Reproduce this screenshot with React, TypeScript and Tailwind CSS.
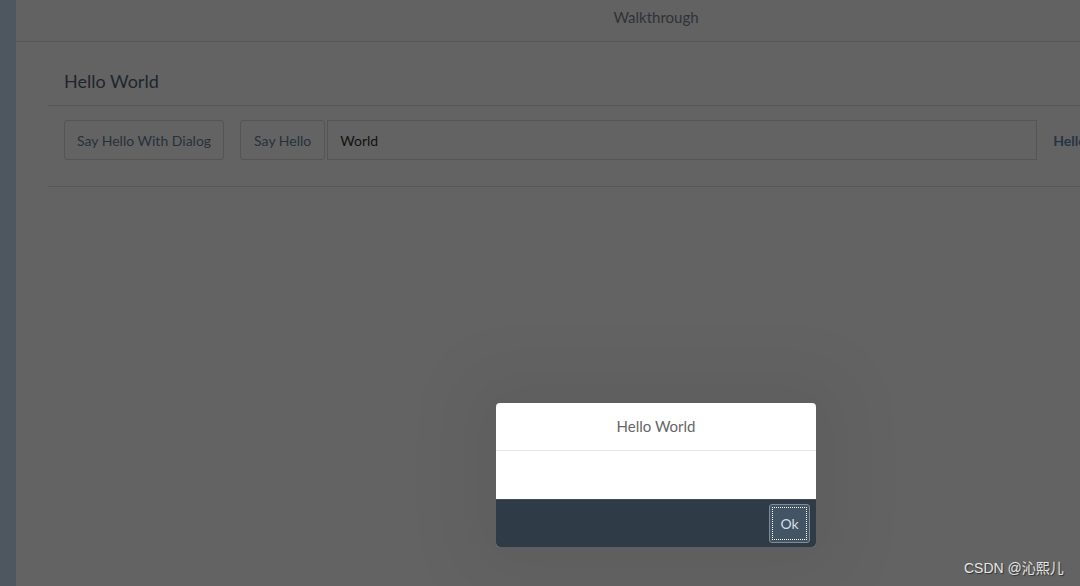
export default function App() {
  return (
    <div className="relative w-[1080px] h-[586px] overflow-hidden bg-[#636363] flex" style={{ fontFamily: 'Lato, "Noto Sans", sans-serif' }}>
      <div className="w-4 shrink-0 bg-[#4e5660]" />
      <div className="w-[1280px] shrink-0 flex flex-col">
        <div className="h-[42px] shrink-0 border-b border-[#575757] flex items-center justify-center pb-[6px] bg-[#626263]">
          <span className="text-[15px] text-[#2f3338]">Walkthrough</span>
        </div>
        <div className="px-8">
          <div className="h-[64px] border-b border-[#575757] flex items-end pl-4 pb-3">
            <span className="text-[18px] leading-6 text-[#1f252d]">Hello World</span>
          </div>
          <div className="h-[81px] border-b border-[#575757] flex items-start pl-4 pt-[14px]">
            <button className="h-10 px-3 border border-[#555555] rounded-[3px] text-[14px] text-[#27313c]">Say Hello With Dialog</button>
            <button className="ml-4 h-10 px-[13px] border border-[#555555] rounded-[3px] text-[14px] text-[#27313c]">Say Hello</button>
            <div className="ml-[2px] h-10 w-[710px] border border-[#555555] flex items-center px-3">
              <span className="text-[14px] text-[#111111]">World</span>
            </div>
            <span className="ml-4 h-10 flex items-center text-[14px] font-bold text-[#253445] whitespace-nowrap">Hello World</span>
          </div>
        </div>
      </div>

      <div className="absolute left-[496px] top-[403px] w-[320px] h-[144px] rounded-[4px] overflow-hidden bg-white flex flex-col shadow-[0_0_70px_30px_rgba(0,0,0,0.05)]">
        <div className="h-[48px] border-b border-[#e5e5e5] flex items-center justify-center">
          <span className="text-[15px] text-[#666666]">Hello World</span>
        </div>
        <div className="h-[48px]" />
        <div className="flex-1 bg-[#2f3b47] border-t border-[#3f4b57] flex items-center justify-end pr-[6px]">
          <div className="w-[41px] h-[39px] rounded-[3px] bg-[#435465] border border-[#7f8c99] p-[2px]">
            <div className="w-full h-full border border-dotted border-white flex items-center justify-center">
              <span className="text-[14px] text-[#d4dde8]">Ok</span>
            </div>
          </div>
        </div>
      </div>

      <div className="absolute left-[964px] top-[558px] text-[14px] text-[#e6e6e6] [text-shadow:1px_1px_1px_rgba(0,0,0,0.5)]" style={{ fontFamily: '"Liberation Sans", "Noto Sans CJK SC", sans-serif' }}>
        CSDN @沁熙儿
      </div>
    </div>
  );
}
